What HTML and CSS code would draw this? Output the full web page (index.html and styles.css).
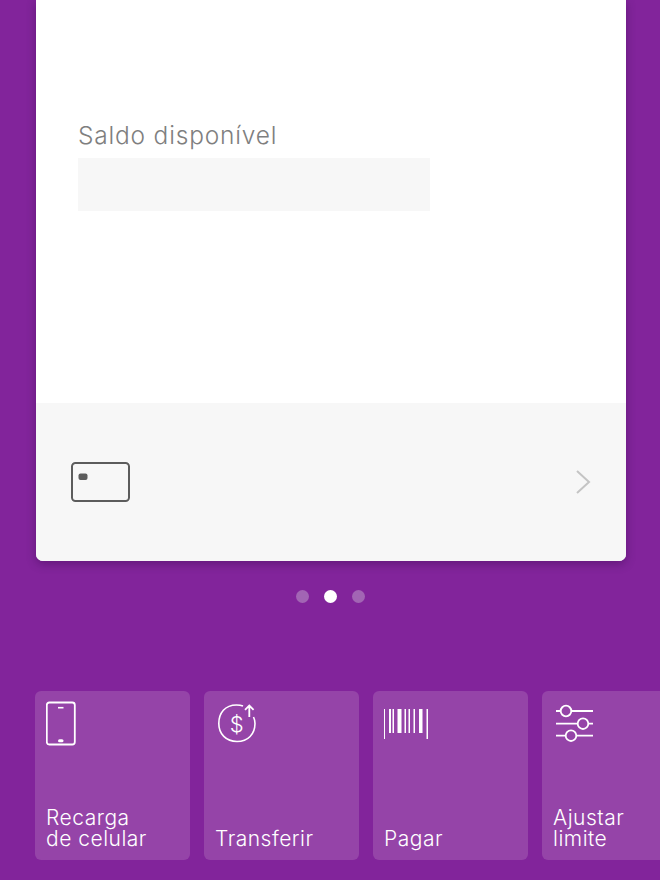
FILE: index.html
```html
<!DOCTYPE html>
<html lang="pt-BR">
<head>
    <meta charset="UTF-8">
    <meta name="viewport" content="width=device-width, initial-scale=1.0">
    <title>Conta</title>
    <link rel="stylesheet" href="styles.css">
</head>
<body>
    <div class="card">
        <div class="card-body">
            <div class="balance-label">Saldo disponível</div>
            <div class="balance-value"></div>
        </div>
        <div class="card-footer">
            <svg class="card-icon" width="60" height="42" viewBox="0 0 60 42" fill="none">
                <rect x="2" y="2" width="57" height="38" rx="3.500" stroke="#5c5c5c" stroke-width="2"/>
                <rect x="8.500" y="12.500" width="9" height="6.500" rx="2" fill="#5c5c5c"/>
            </svg>
            <svg class="chevron" width="16" height="26" viewBox="0 0 16 26" fill="none">
                <path d="M2 2L14 13L2 24" stroke="#c4c4c4" stroke-width="2"/>
            </svg>
        </div>
    </div>

    <div class="dots">
        <span class="dot"></span>
        <span class="dot active"></span>
        <span class="dot"></span>
    </div>

    <div class="shortcuts">
        <div class="tile">
            <svg class="tile-icon" width="42" height="46" viewBox="0 0 42 46" fill="none" stroke="#fff">
                <rect x="0.800" y="1.500" width="28" height="42" rx="2.500" stroke-width="1.800"/>
                <path d="M12 6.700H17.500" stroke-width="1.600"/>
                <rect x="12" y="38.300" width="5.500" height="3" rx="1.500" fill="#fff" stroke="none"/>
            </svg>
            <div class="tile-label">Recarga<br>de celular</div>
        </div>
        <div class="tile">
            <svg class="tile-icon" width="44" height="46" viewBox="0 0 44 46" fill="none" stroke="#fff">
                <path d="M28 5C26 4.200 24 4 21.500 4C10 4 3.800 12 3.800 22.500C3.800 33 11 40.500 22 40.500C33 40.500 40 33 40 22.500C40 20 39.500 18 38.500 16" stroke-width="1.600"/>
                <path d="M34.300 16V4.500M30 8.800L34.300 4.500L38.600 8.800" stroke-width="1.800"/>
                <text class="dollar" x="21.700" y="30.500" text-anchor="middle">$</text>
            </svg>
            <div class="tile-label">Transferir</div>
        </div>
        <div class="tile">
            <svg class="tile-icon" width="48" height="40" viewBox="0.500 0 48 40" fill="#fff">
                <rect x="0" y="8" width="1.500" height="30"/>
                <rect x="5.500" y="8" width="2" height="24"/>
                <rect x="9" y="8" width="1.500" height="24"/>
                <rect x="14" y="8" width="4" height="24"/>
                <rect x="21" y="8" width="1.500" height="24"/>
                <rect x="25" y="8" width="1.500" height="24"/>
                <rect x="30" y="8" width="1.500" height="24"/>
                <rect x="35.500" y="8" width="3.500" height="24"/>
                <rect x="43" y="8" width="1.500" height="30"/>
            </svg>
            <div class="tile-label">Pagar</div>
        </div>
        <div class="tile">
            <svg class="tile-icon" width="42" height="42" viewBox="0 0 42 42" fill="none" stroke="#fff" stroke-width="1.800">
                <path d="M3 10H8M18 10H40"/>
                <circle cx="13" cy="10" r="5.300"/>
                <path d="M3 22.700H25M35 22.700H40"/>
                <circle cx="30" cy="22.700" r="5.300"/>
                <path d="M3 34.700H13M23 34.700H40"/>
                <circle cx="18" cy="34.700" r="5.300"/>
            </svg>
            <div class="tile-label">Ajustar<br>limite</div>
        </div>
    </div>
</body>
</html>
```

FILE: styles.css
```css
html, body {
    height: 880px;
}

body {
    margin: 0;
    overflow: hidden;
    background-color: #82249b;
    font-family: Inter, Lato, sans-serif;
    font-weight: 300;
}

.card {
    display: flex;
    flex-direction: column;
    height: 561px;
    margin: 0 34px 0 36px;
    background: white;
    border-radius: 0 0 7px 7px;
    box-shadow: 0 3px 10px rgba(40, 0, 60, 0.35);
    overflow: hidden;
}

.card-body {
    flex: 1;
    padding: 119px 0 0 42px;
}

.balance-label {
    font-size: 24.500px;
    line-height: 32px;
    letter-spacing: 0.800px;
    color: #7f7f7f;
}

.balance-value {
    width: 352px;
    height: 53px;
    margin-top: 7px;
    background-color: #f7f7f7;
}

.card-footer {
    display: flex;
    align-items: center;
    justify-content: space-between;
    height: 158px;
    padding: 0 35px 0 34px;
    background-color: #f7f7f7;
}

.dots {
    display: flex;
    justify-content: center;
    gap: 15px;
    margin-top: 29px;
}

.dot {
    width: 13px;
    height: 13px;
    border-radius: 50%;
    background-color: #a265b4;
}

.dot.active {
    background-color: white;
}

.shortcuts {
    display: flex;
    gap: 14px;
    margin: 88px 0 0 35px;
}

.tile {
    display: flex;
    flex: none;
    flex-direction: column;
    justify-content: space-between;
    box-sizing: border-box;
    width: 155px;
    height: 169px;
    padding: 10px 11px 11px;
    background-color: #9544a8;
    border-radius: 6px;
}

.tile-label {
    font-size: 21px;
    line-height: 21px;
    letter-spacing: 0.500px;
    color: white;
}

.dollar {
    font-size: 22px;
    fill: white;
    stroke: none;
}
```
